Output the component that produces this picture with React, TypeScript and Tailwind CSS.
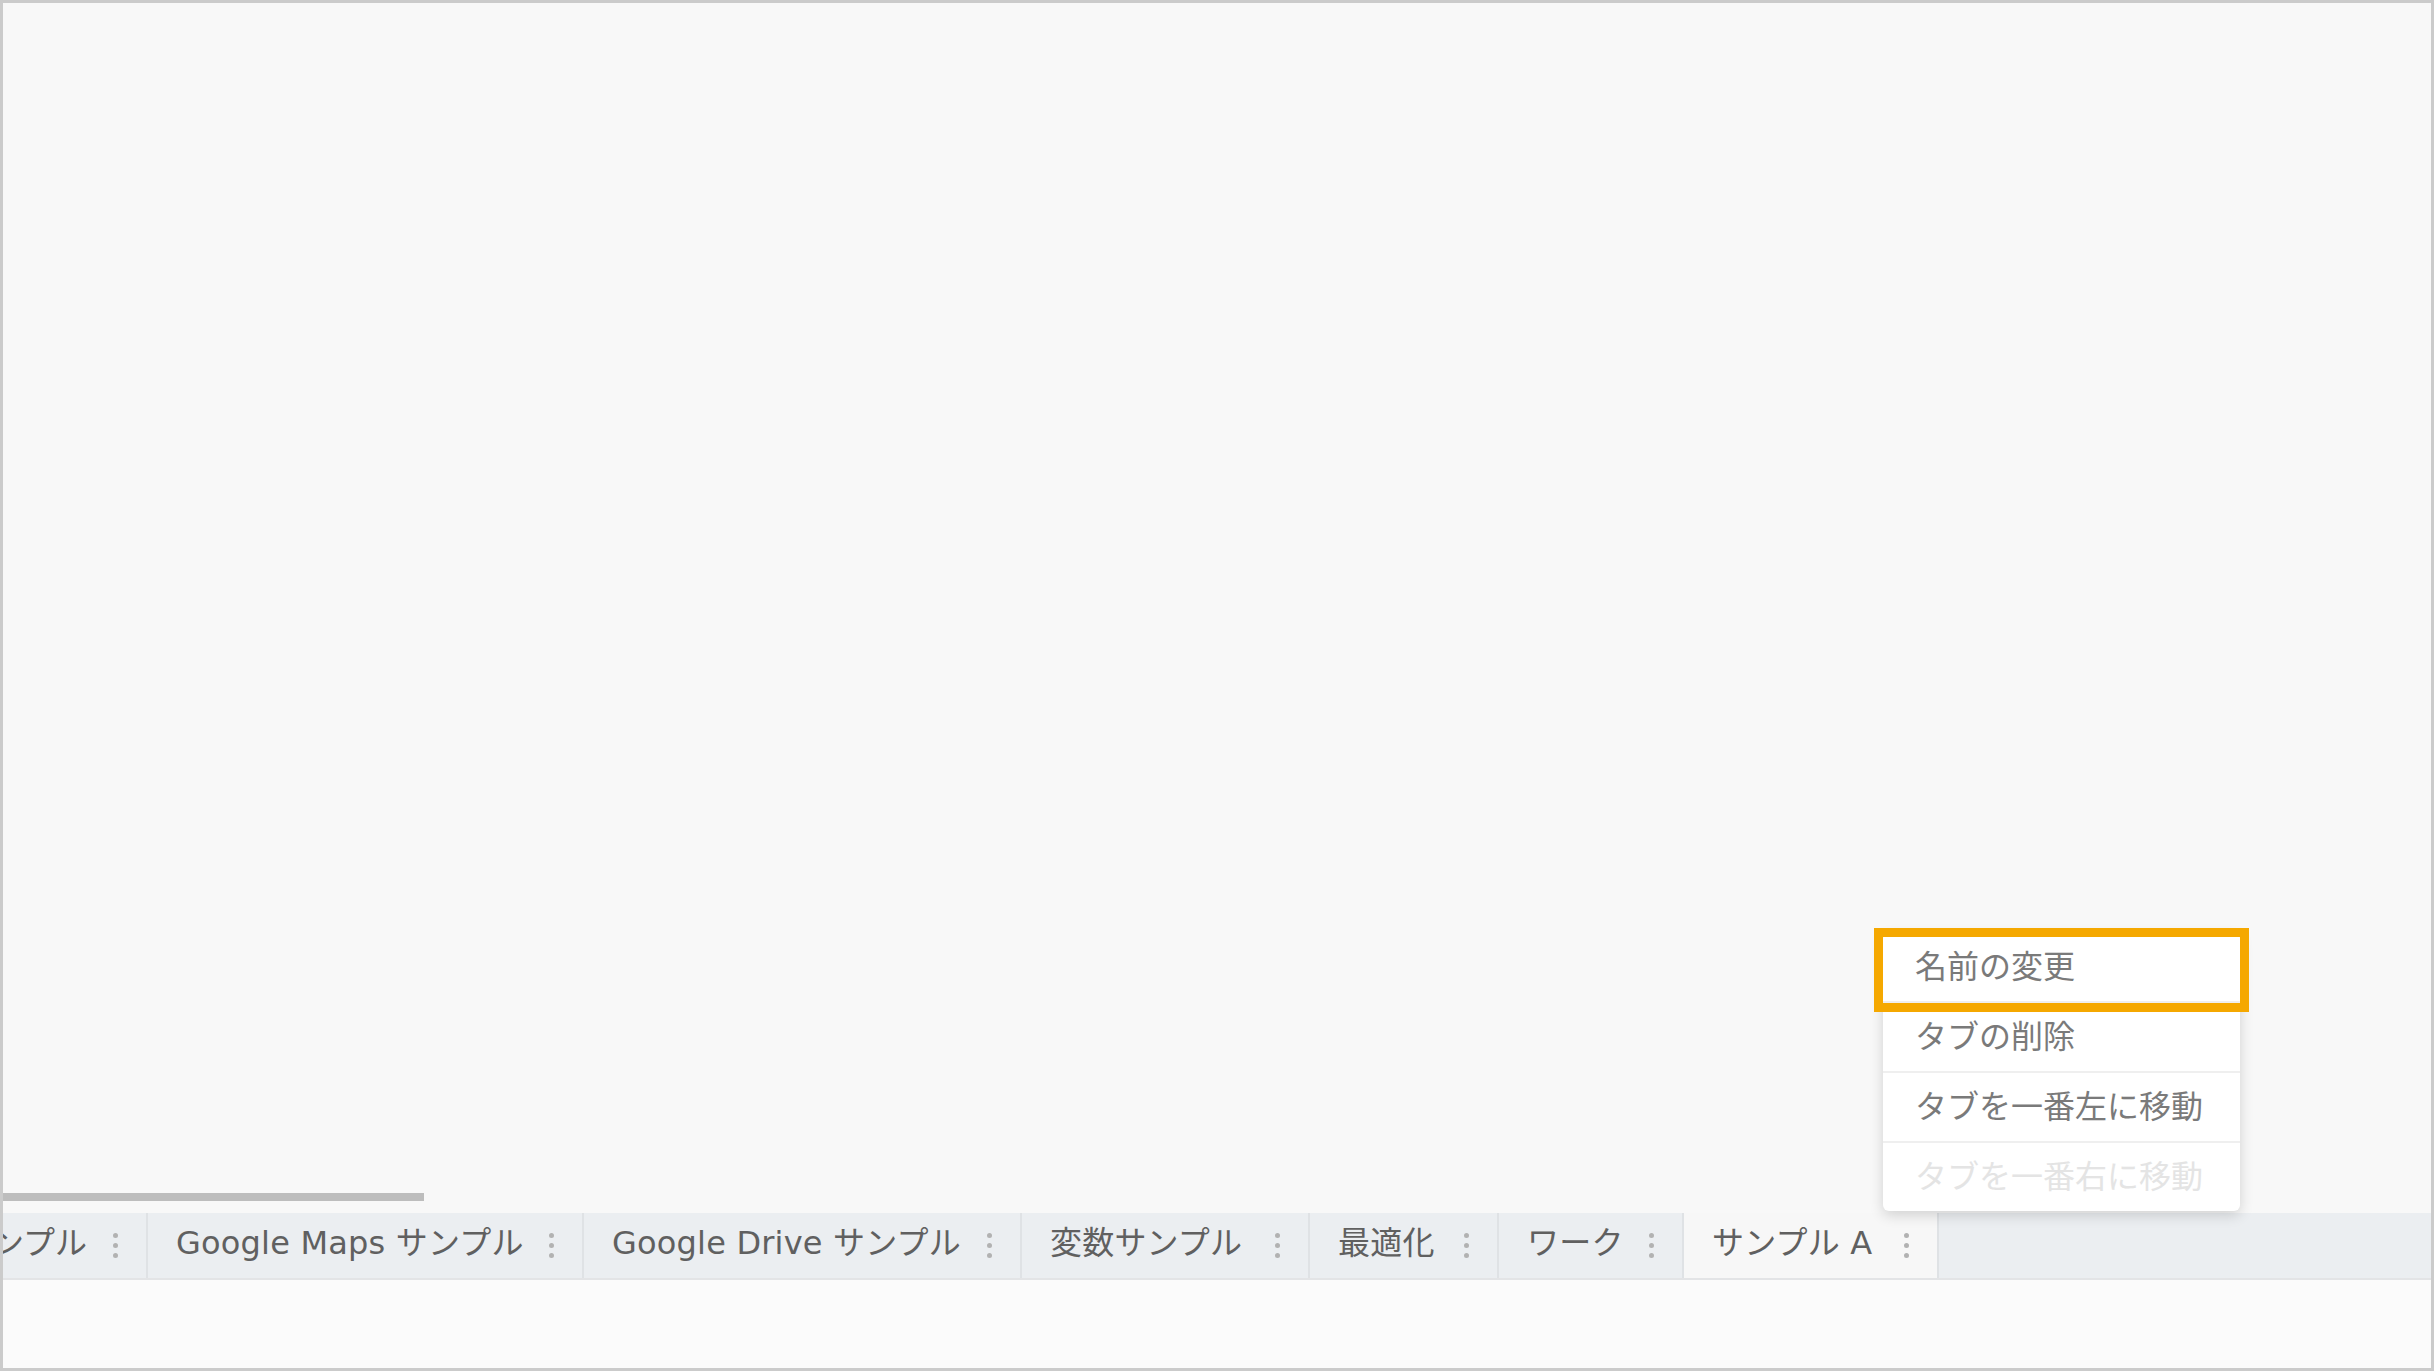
import React from 'react'

interface Tab {
  label: string
  width: string
  active?: boolean
  clipped?: boolean
}

const tabs: Tab[] = [
  { label: 'APIサンプル', width: 'w-[145px]', clipped: true },
  { label: 'Google Maps サンプル', width: 'w-[436px]' },
  { label: 'Google Drive サンプル', width: 'w-[438px]' },
  { label: '変数サンプル', width: 'w-[288px]' },
  { label: '最適化', width: 'w-[189px]' },
  { label: 'ワーク', width: 'w-[185px]' },
  { label: 'サンプル A', width: 'w-[255px]', active: true },
]

const menuItems = [
  { label: '名前の変更' },
  { label: 'タブの削除' },
  { label: 'タブを一番左に移動' },
  { label: 'タブを一番右に移動', disabled: true },
]

function Kebab() {
  return (
    <div className="flex flex-col gap-[5px] shrink-0">
      <span className="block w-[5px] h-[5px] rounded-full bg-[#b2b2b2]" />
      <span className="block w-[5px] h-[5px] rounded-full bg-[#b2b2b2]" />
      <span className="block w-[5px] h-[5px] rounded-full bg-[#b2b2b2]" />
    </div>
  )
}

export default function App() {
  return (
    <div
      className="relative w-[2434px] h-[1371px] border-[3px] border-[#cbcbcb] bg-[#f8f8f8] flex flex-col overflow-hidden"
      style={{ fontFamily: '"DejaVu Sans", "Noto Sans CJK JP", sans-serif' }}
    >
      {/* Canvas area */}
      <div className="flex-1 flex flex-col justify-end">
        <div className="w-[421px] h-[8px] bg-[#bdbdbd] mb-[12px]" />
      </div>

      {/* Sheet tabs */}
      <div className="h-[67px] flex bg-[#ebeef1] border-b-[2px] border-[#e3e4e6]">
        {tabs.map(tab =>
          tab.clipped ? (
            <div
              key={tab.label}
              className={`${tab.width} shrink-0 h-full flex items-center pr-[28px] border-r-[2px] border-[#dfe2e5] overflow-hidden`}
            >
              <div className="flex-1 min-w-0 flex justify-end overflow-hidden mb-[5px]">
                <span className="shrink-0 text-[32px] leading-none text-[#606060] whitespace-nowrap">
                  {tab.label}
                </span>
              </div>
              <div className="ml-[26px]">
                <Kebab />
              </div>
            </div>
          ) : (
            <div
              key={tab.label}
              className={`${tab.width} shrink-0 h-full flex items-center justify-between px-[28px] border-r-[2px] border-[#dfe2e5] ${
                tab.active ? 'bg-[#f7f7f7]' : ''
              }`}
            >
              <span className="mb-[5px] text-[32px] tracking-[0.2px] leading-none text-[#606060] whitespace-nowrap">
                {tab.label}
              </span>
              <Kebab />
            </div>
          )
        )}
      </div>

      {/* Bottom strip */}
      <div className="h-[88px] bg-[#fbfbfb]" />

      {/* Tab context menu */}
      <div className="absolute left-[1880px] top-[930px] w-[357px] bg-white rounded-[6px] shadow-[0_4px_14px_rgba(0,0,0,0.16)] flex flex-col overflow-hidden">
        {menuItems.map((item, i) => (
          <React.Fragment key={item.label}>
            {i > 0 && <div className="h-[2px] bg-[#efefef]" />}
            <div
              className={`h-[68px] flex items-center pl-[32px] text-[32px] leading-none whitespace-nowrap ${
                item.disabled ? 'text-[#e4e4e4]' : 'text-[#7a7a7a]'
              }`}
            >
              {item.label}
            </div>
          </React.Fragment>
        ))}
      </div>

      {/* Highlight frame */}
      <div className="absolute left-[1871px] top-[925px] w-[375px] h-[84px] border-[9px] border-[#f5a800]" />
    </div>
  )
}
